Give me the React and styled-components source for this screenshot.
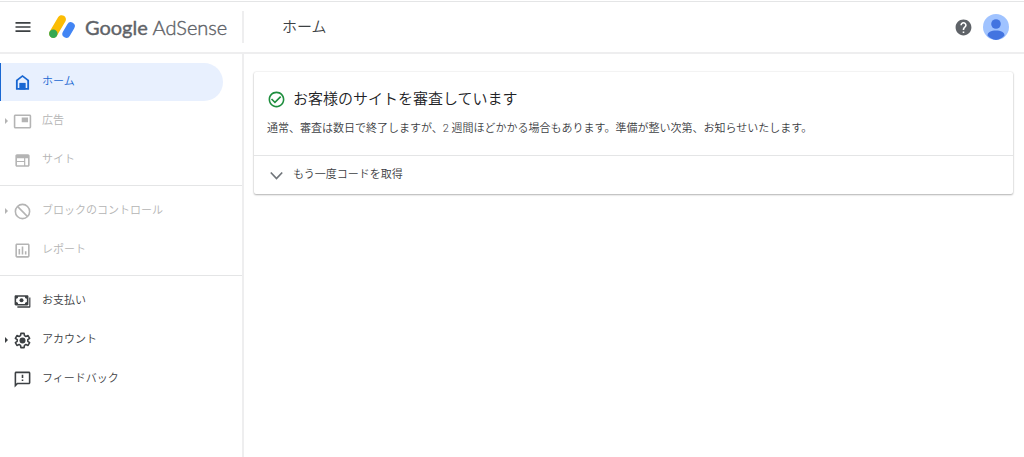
import React from 'react'
import styled, { createGlobalStyle } from 'styled-components'
import {
  MdMenu,
  MdHelp,
  MdPictureInPicture,
  MdOutlineAssessment,
  MdOutlineFeedback,
  MdCheckCircleOutline,
} from 'react-icons/md'

const GlobalStyle = createGlobalStyle`
  * {
    box-sizing: border-box;
  }

  body {
    margin: 0;
    background: #ffffff;
    color: #3c4043;
    font-family: Roboto, "Noto Sans CJK JP", sans-serif;
    font-size: 11px;
    font-weight: 350;
    line-height: 16px;
  }
`;

const Page = styled.div`
  min-height: 100vh;
  display: flex;
  flex-direction: column;
  border-top: 1px solid #ffffff;
`;

const Header = styled.header`
  height: 53px;
  display: flex;
  align-items: center;
  border-top: 1px solid #e4e5e6;
  border-bottom: 2px solid #eeeeef;
  padding-right: 15px;
`;

const Brand = styled.div`
  width: 244px;
  height: 32px;
  flex-shrink: 0;
  display: flex;
  align-items: center;
  padding-left: 13px;
  border-right: 2px solid #eeeeef;
`;

const IconButton = styled.button`
  display: flex;
  padding: 0;
  border: 0;
  border-radius: 50%;
  background: none;
  color: ${(props) => props.$color || '#3c4043'};
  font-size: ${(props) => props.$size || '20px'};
  cursor: pointer;
`;

const LogoLink = styled.a`
  display: flex;
  align-items: center;
  gap: 10px;
  margin-left: 16px;
  color: #5f6368;
  font-family: Lato, sans-serif;
  font-size: 20px;
  font-weight: 300;
  line-height: 24px;
  text-decoration: none;
  white-space: nowrap;
  -webkit-text-stroke: 0.4px #5f6368;

  strong {
    font-weight: 400;
  }
`;

const PageTitle = styled.h1`
  flex: 1;
  margin: 0;
  padding-left: 38px;
  font-size: 15px;
  font-weight: 350;
  line-height: 24px;
`;

const Actions = styled.div`
  display: flex;
  align-items: center;
  gap: 10px;
`;

const Body = styled.div`
  flex: 1;
  display: flex;
`;

const Sidebar = styled.nav`
  width: 244px;
  flex-shrink: 0;
  padding-top: 3px;
  border-right: 2px solid #eeeeef;
`;

const NavGroup = styled.ul`
  display: flex;
  flex-direction: column;
  gap: 1px;
  margin: 0;
  padding: 6px 0;
  list-style: none;

  & + & {
    border-top: 1px solid #e4e5e6;
  }
`;

const itemColors = {
  active: '#1967d2',
  disabled: '#b4b4b4',
  normal: '#3c4043',
};

const NavItem = styled.a`
  height: 38px;
  display: flex;
  align-items: center;
  margin-right: 19px;
  border-left: 1px solid ${(props) => (props.$state === 'active' ? '#1967d2' : 'transparent')};
  border-radius: 0 19px 19px 0;
  background: ${(props) => (props.$state === 'active' ? '#e8f0fe' : 'transparent')};
  color: ${(props) => itemColors[props.$state]};
  text-decoration: none;

  svg {
    width: 19px;
    height: 19px;
  }
`;

const Arrow = styled.span`
  width: 3px;
  margin: 0 5px 0 4px;
  border: 3px solid transparent;
  border-left-color: ${(props) => (props.$show ? 'currentColor' : 'transparent')};
  border-right-width: 0;
`;

const NavLabel = styled.span`
  padding-left: 10px;
`;

const Main = styled.main`
  flex: 1;
  padding: 18px 11px 18px 10px;
`;

const Card = styled.section`
  border-radius: 2px;
  background: #ffffff;
  box-shadow: 0 1px 2px rgba(0, 0, 0, 0.28), 0 0 2px rgba(0, 0, 0, 0.14);
`;

const CardContent = styled.div`
  padding: 15px 13px 18px;
`;

const CardTitle = styled.h2`
  display: flex;
  align-items: center;
  gap: 7px;
  margin: 0 0 10px;
  color: #202124;
  font-size: 15px;
  font-weight: 350;
  line-height: 24px;

  svg {
    width: 19px;
    height: 19px;
    color: #1e8e3e;
  }
`;

const CardText = styled.p`
  margin: 0;
`;

const Expander = styled.button`
  width: 100%;
  height: 39px;
  display: flex;
  align-items: center;
  gap: 7px;
  padding: 0 13px;
  border: 0;
  border-top: 1px solid #e4e5e6;
  background: none;
  color: inherit;
  font: inherit;
  text-align: left;
  cursor: pointer;
`;

const LogoMark = () => (
  <svg width="26" height="24" viewBox="0 0 26 24" aria-hidden="true">
    <path d="M4.3 18.6 12.7 4.4" stroke="#fbbc04" strokeWidth="8.4" strokeLinecap="round" />
    <path d="M17.4 18.8 21.8 11.2" stroke="#4285f4" strokeWidth="8" strokeLinecap="round" />
    <circle cx="4.3" cy="18.8" r="4.2" fill="#34a853" />
  </svg>
)

const HomeIcon = () => (
  <svg viewBox="0 0 24 24" fill="currentColor" aria-hidden="true">
    <path d="M12 2.500 3.700 8.700V21h16.600V8.700zM6 18.900V9.800l6-4.600 6 4.600v9.100h-2.300v-6.400H8.300v6.400z" />
    <path d="M8.300 12.500h7.400V21H8.300z" />
  </svg>
)

const SiteIcon = () => (
  <svg viewBox="0 0 24 24" fill="currentColor" aria-hidden="true">
    <path d="M5 4c-1.100 0-2 .9-2 2v12c0 1.100.9 2 2 2h14c1.100 0 2-.9 2-2V6c0-1.100-.9-2-2-2zm0 5h9v3.500H5zm0 5h9v4H5zm10.500-5H19v9h-3.500z" />
  </svg>
)

const BlockIcon = () => (
  <svg viewBox="0 0 24 24" fill="none" stroke="currentColor" strokeWidth="2" aria-hidden="true">
    <circle cx="12" cy="12" r="9" />
    <path d="M5.600 5.600 18.400 18.400" />
  </svg>
)

const PaymentsIcon = () => (
  <svg viewBox="0 0 24 24" fill="currentColor" aria-hidden="true">
    <path
      fillRule="evenodd"
      d="M3.500 4h14.500c.8 0 1.500.7 1.500 1.500v10c0 .8-.7 1.500-1.500 1.500H3.500C2.700 17 2 16.300 2 15.500v-10C2 4.700 2.700 4 3.500 4zm3 2c0 1.400-1 2.500-2.500 2.500v4c1.500 0 2.500 1.100 2.500 2.500H15c0-1.400 1-2.500 2.500-2.500v-4C16 8.500 15 7.400 15 6z"
    />
    <circle cx="10.750" cy="10.500" r="2.500" />
    <path d="M20.500 7H22v11.500c0 .8-.7 1.500-1.500 1.500H5.500v-2h15z" />
  </svg>
)

const AccountIcon = () => (
  <svg viewBox="0 0 24 24" aria-hidden="true">
    <path
      fill="none"
      stroke="currentColor"
      strokeWidth="2"
      strokeLinejoin="round"
      d="M10 3h4l.5 2.900 1.800 1 2.700-1.100 2 3.500-2.300 1.700v2l2.300 1.700-2 3.500-2.700-1.100-1.800 1L14 21h-4l-.5-2.900-1.800-1L5 18.200l-2-3.500L5.300 13v-2L3 9.300l2-3.500 2.700 1.100 1.800-1z"
    />
    <circle cx="12" cy="12" r="3.800" fill="currentColor" />
  </svg>
)

const ChevronIcon = () => (
  <svg width="19" height="19" viewBox="0 0 19 19" fill="none" aria-hidden="true">
    <path d="M3.800 6.500 9.500 12.500 15.200 6.500" stroke="#70757a" strokeWidth="1.700" />
  </svg>
)

const Avatar = () => (
  <svg width="26" height="26" viewBox="0 0 26 26" aria-hidden="true">
    <circle cx="13" cy="13" r="13" fill="#a0c3ff" />
    <circle cx="13" cy="10" r="4.800" fill="#4374e0" />
    <path d="M4.500 21.500c0-3.300 3.600-5 8.500-5s8.500 1.700 8.500 5A12.700 12.700 0 0 1 13 26a12.700 12.700 0 0 1-8.500-4.500z" fill="#4374e0" />
  </svg>
)

const groups = [
  [
    { label: 'ホーム', icon: HomeIcon, state: 'active' },
    { label: '広告', icon: MdPictureInPicture, state: 'disabled', arrow: true },
    { label: 'サイト', icon: SiteIcon, state: 'disabled' },
  ],
  [
    { label: 'ブロックのコントロール', icon: BlockIcon, state: 'disabled', arrow: true },
    { label: 'レポート', icon: MdOutlineAssessment, state: 'disabled' },
  ],
  [
    { label: 'お支払い', icon: PaymentsIcon, state: 'normal' },
    { label: 'アカウント', icon: AccountIcon, state: 'normal', arrow: true },
    { label: 'フィードバック', icon: MdOutlineFeedback, state: 'normal' },
  ],
];

const App = () => {
  return (
    <Page lang="ja">
      <GlobalStyle />
      <Header>
        <Brand>
          <IconButton type="button" aria-label="メニュー">
            <MdMenu />
          </IconButton>
          <LogoLink href="#home">
            <LogoMark />
            <span><strong>Google</strong> AdSense</span>
          </LogoLink>
        </Brand>
        <PageTitle>ホーム</PageTitle>
        <Actions>
          <IconButton type="button" aria-label="ヘルプ" $color="#5f6368" $size="19px">
            <MdHelp />
          </IconButton>
          <IconButton type="button" aria-label="プロフィール">
            <Avatar />
          </IconButton>
        </Actions>
      </Header>
      <Body>
        <Sidebar>
          {groups.map((items, index) => (
            <NavGroup key={index}>
              {items.map(({ label, icon: Icon, state, arrow }) => (
                <li key={label}>
                  <NavItem
                    href="#"
                    $state={state}
                    aria-current={state === 'active' ? 'page' : undefined}
                    aria-disabled={state === 'disabled' || undefined}
                  >
                    <Arrow $show={arrow} />
                    <Icon />
                    <NavLabel>{label}</NavLabel>
                  </NavItem>
                </li>
              ))}
            </NavGroup>
          ))}
        </Sidebar>
        <Main>
          <Card>
            <CardContent>
              <CardTitle>
                <MdCheckCircleOutline />
                お客様のサイトを審査しています
              </CardTitle>
              <CardText>
                通常、審査は数日で終了しますが、2 週間ほどかかる場合もあります。準備が整い次第、お知らせいたします。
              </CardText>
            </CardContent>
            <Expander type="button" aria-expanded="false">
              <ChevronIcon />
              もう一度コードを取得
            </Expander>
          </Card>
        </Main>
      </Body>
    </Page>
  )
}

export default App
